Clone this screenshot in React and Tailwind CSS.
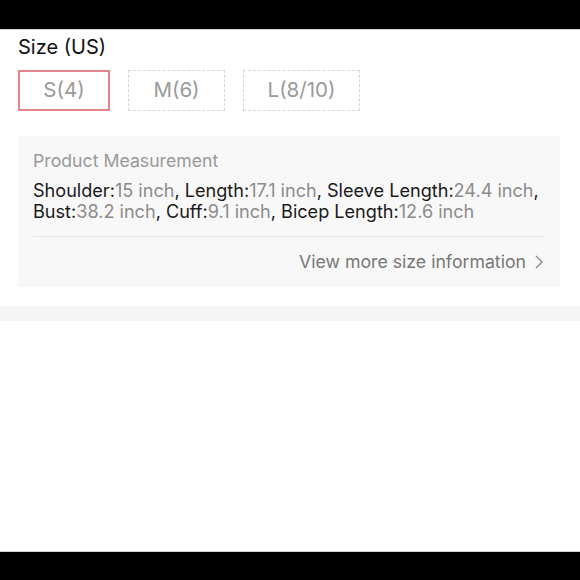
export default function App() {
  const font = { fontFamily: 'Inter, "Liberation Sans", Arial, sans-serif' };
  return (
    <div className="w-[580px] h-[580px] bg-white flex flex-col overflow-hidden" style={font}>
      <div className="h-[29px] bg-black shrink-0" />
      <div className="h-[1px] bg-[#d4d4d4] shrink-0" />
      <div className="px-[18px] pt-[5px] shrink-0">
        <div className="text-[20px] leading-[24px] text-[#111]">Size (US)</div>
        <div className="flex gap-[18px] mt-[11px]">
          <div className="w-[92px] h-[41px] border-2 border-[#e3868a] flex items-center justify-center text-[20.5px] text-[#9a9a9a]">S(4)</div>
          <div className="w-[97px] h-[41px] border border-dashed border-[#d6d6d6] flex items-center justify-center text-[20.5px] text-[#9a9a9a]">M(6)</div>
          <div className="w-[117px] h-[41px] border border-dashed border-[#d6d6d6] flex items-center justify-center text-[20.5px] text-[#9a9a9a]">L(8/10)</div>
        </div>
        <div className="mt-[25px] w-[542px] h-[151px] bg-[#f8f8f8] px-[15px] pt-[14px]">
          <div className="text-[17.7px] leading-[22px] text-[#999]">Product Measurement</div>
          <div className="mt-[8px] text-[18.1px] leading-[21px] text-[#1a1a1a] whitespace-nowrap">
            Shoulder:<span className="text-[#8c8c8c]">15 inch</span>, Length:<span className="text-[#8c8c8c]">17.1 inch</span>, Sleeve Length:<span className="text-[#8c8c8c]">24.4 inch</span>,
            <br />
            Bust:<span className="text-[#8c8c8c]">38.2 inch</span>, Cuff:<span className="text-[#8c8c8c]">9.1 inch</span>, Bicep Length:<span className="text-[#8c8c8c]">12.6 inch</span>
          </div>
          <div className="mt-[14px] h-[1px] bg-[#e6e6e6]" />
          <div className="mt-[14px] flex justify-end items-center gap-[9px] pr-[2px] text-[17.7px] leading-[22px] text-[#777]">
            <span>View more size information</span>
            <svg width="8" height="14" viewBox="0 0 8 14" fill="none" stroke="#888" strokeWidth="1.4">
              <path d="M1 1l6 6-6 6" />
            </svg>
          </div>
        </div>
      </div>
      <div className="mt-[19px] h-[15px] bg-[#f5f5f5] shrink-0" />
      <div className="flex-1 bg-white" />
      <div className="h-[1px] bg-[#d4d4d4] shrink-0" />
      <div className="h-[28px] bg-black shrink-0" />
    </div>
  );
}
